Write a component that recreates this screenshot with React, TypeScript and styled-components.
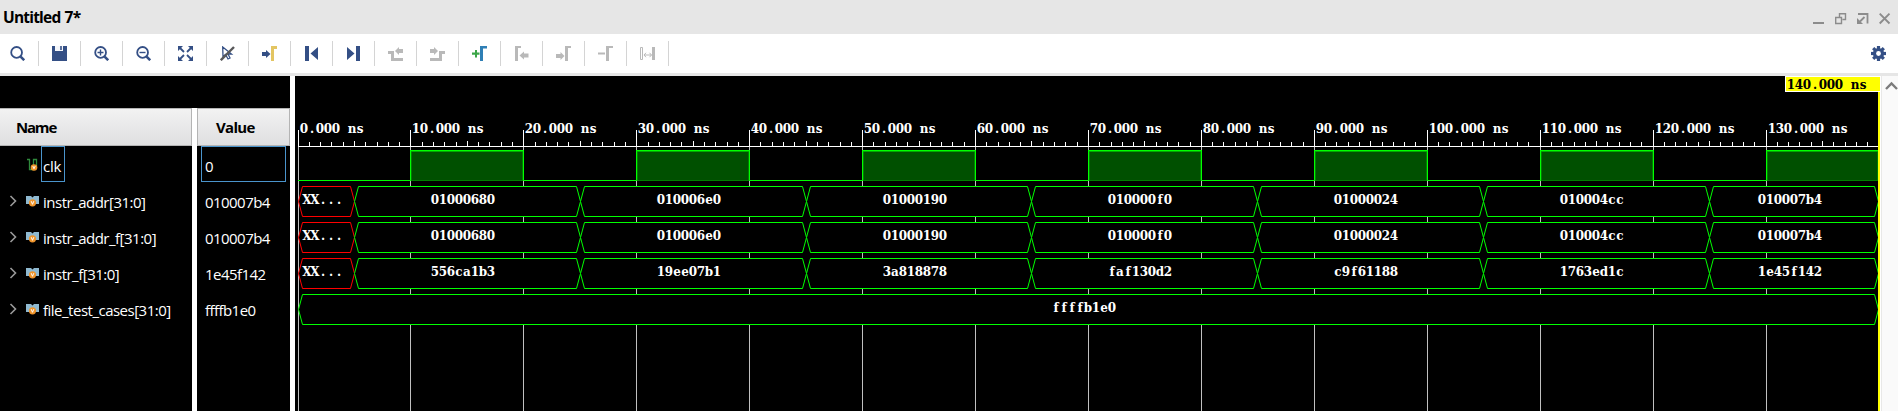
import React from "react";
import styled, { createGlobalStyle } from "styled-components";

const Global = createGlobalStyle`
  body { margin: 0; background: #fff; overflow: hidden; }
  * { box-sizing: border-box; }
`;

const NAVY = "#344f85";
const GREY = "#b9b9b9";
const UI = `"Open Sans", "Noto Sans", sans-serif`;

const Window = styled.div`
  width: 1898px;
  height: 411px;
  display: flex;
  flex-direction: column;
  font-family: ${UI};
  background: #fff;
`;
const TitleBar = styled.header`
  height: 34px;
  flex: none;
  display: flex;
  align-items: center;
  justify-content: space-between;
  padding: 0 7px 0 3px;
  background: #e6e6e6;
`;
const Title = styled.span`
  font-size: 15.5px;
  font-weight: 700;
  letter-spacing: -0.8px;
  word-spacing: 1px;
  line-height: 20px;
  color: #000;
`;
const WindowButtons = styled.div`
  display: flex;
  gap: 10px;
  padding-top: 4px;
`;
const WinSvg = styled.svg`
  display: block;
  width: 12px;
  height: 12px;
`;
const Toolbar = styled.nav`
  height: 42px;
  flex: none;
  display: flex;
  align-items: center;
  border-bottom: 3px solid #e6e6e6;
  background: #fff;
`;
const Tool = styled.div<{ $first?: boolean }>`
  width: ${(p) => (p.$first ? 39 : 42)}px;
  height: 25px;
  display: flex;
  align-items: center;
  padding-left: ${(p) => (p.$first ? 10 : 13)}px;
  border-right: 1px solid #d4d4d4;
`;
const ToolSvg = styled.svg`
  display: block;
  width: 15px;
  height: 15px;
`;
const Settings = styled.div`
  margin-left: auto;
  padding-right: 12px;
`;
const Body = styled.main`
  flex: 1;
  display: flex;
  min-height: 0;
`;
const SignalPane = styled.section`
  width: 290px;
  flex: none;
  display: flex;
  flex-direction: column;
  margin-right: 5px;
  background: #000;
`;
const Spacer = styled.div`
  height: 32px;
  flex: none;
`;
const Columns = styled.div`
  flex: 1;
  display: flex;
  gap: 5px;
  background: #fff;
`;
const Column = styled.div<{ $width: number }>`
  width: ${(p) => p.$width}px;
  background: #000;
`;
const ColumnHead = styled.div<{ $indent: number; $ruled?: boolean }>`
  height: 38px;
  padding: 0 0 0 ${(p) => p.$indent}px;
  border: 1px solid #b4b4b4;
  border-left-width: ${(p) => (p.$ruled ? 1 : 0)}px;
  background: linear-gradient(#f2f2f2, #dfdfe0);
  font-size: 15px;
  font-weight: 700;
  letter-spacing: ${(p) => (p.$ruled ? -0.7 : -1.2)}px;
  line-height: 37px;
`;
const NameRow = styled.div`
  height: 36px;
  display: flex;
  align-items: center;
  padding-left: 9px;
  color: #fff;
`;
const Expander = styled.svg`
  width: 8px;
  height: 12px;
  margin: 2px 9px 0 0;
`;
const KindIcon = styled.svg<{ $drop?: boolean }>`
  width: 13px;
  height: 13px;
  margin: ${(p) => (p.$drop ? 2 : 0)}px 2px 0 0;
`;
const Label = styled.span<{ $focused?: boolean }>`
  height: 36px;
  padding: 0 3px 0 1px;
  border: 1px solid ${(p) => (p.$focused ? "#4a94cc" : "transparent")};
  font-size: 15px;
  letter-spacing: ${(p) => (p.$focused ? -0.2 : -0.5)}px;
  line-height: 38px;
  white-space: pre;
`;
const ValueCell = styled.div<{ $focused?: boolean }>`
  height: 36px;
  margin: 0 4px;
  padding-left: 3px;
  border: 1px solid ${(p) => (p.$focused ? "#4a94cc" : "transparent")};
  color: #fff;
  font-size: 15px;
  letter-spacing: -0.55px;
  line-height: 38px;
`;
const Wave = styled.svg`
  display: block;
  flex: none;
  width: 1586px;
  height: 335px;
  background: #000;
`;
const MonoText = styled.text`
  font-family: "DejaVu Serif Condensed", "DejaVu Serif", serif;
  font-stretch: condensed;
  font-weight: 700;
  font-size: 13.3px;
  text-anchor: middle;
  white-space: pre;
`;
const ScrollTrack = styled.div`
  flex: 1;
  border-left: 1px solid #e8e8e8;
  background: #fafafa;
  padding: 5px 0 0 3px;
`;
const ScrollArrow = styled.svg`
  display: block;
  width: 13px;
  height: 10px;
`;

const magnifier = (
  <>
    <circle cx="6.6" cy="6.4" r="5.4" fill="none" stroke={NAVY} strokeWidth="1.8" />
    <path d="M10.6 10.6L14.2 14.2" stroke={NAVY} strokeWidth="2.6" />
  </>
);

const tools: React.ReactNode[] = [
  magnifier,
  <>
    <path fill={NAVY} d="M0 0H15V15H0Z" />
    <path fill="#f4f6fa" d="M3 0H11V5H3Z" />
    <path fill={NAVY} d="M8.2 0H9.8V4H8.2Z" />
  </>,
  <>
    {magnifier}
    <path d="M3.5 6.5H9.5M6.5 3.5V9.5" stroke={NAVY} strokeWidth="1.4" />
  </>,
  <>
    {magnifier}
    <path d="M3.5 6.5H9.5" stroke={NAVY} strokeWidth="1.4" />
  </>,
  <>
    <path fill={NAVY} d="M0 0H5L0 5ZM15 0V5L10 0ZM0 15V10L5 15ZM15 15H10L15 10Z" />
    <path d="M2 2L6 6M13 2L9 6M2 13L6 9M13 13L9 9" stroke={NAVY} strokeWidth="1.8" />
  </>,
  <>
    <path d="M2.7 1L3 10.5L5.5 8.5L8 13L10 12L8 8H11.5Z" fill="none" stroke={NAVY} strokeWidth="1.3" />
    <path d="M0.8 14.2L14 1" stroke="#58585a" strokeWidth="2.4" />
  </>,
  <>
    <path fill={NAVY} d="M0 6H4V4L8.5 8L4 12V10H0Z" />
    <path fill="#e3c562" d="M9 0H15V3H12V15H9Z" />
  </>,
  <path fill={NAVY} d="M1 0H5V15H1ZM14 1V14L6.5 7.5Z" />,
  <path fill={NAVY} d="M14 0H10V15H14ZM1 1V14L8.5 7.5Z" />,
  <path fill={GREY} d="M0 5H6V12H15V15H3V8H0ZM7 5L11 1V3H15V7H11V9Z" />,
  <path fill={GREY} d="M15 5H9V12H0V15H12V8H15ZM8 5L4 1V3H0V7H4V9Z" />,
  <>
    <path fill="#3ba648" d="M0 6.5H3V4H5V6.5H7.5V8.7H5V11.5H3V8.7H0Z" />
    <path fill="#2f7fb5" d="M8 0H15V2.5H11V15H8Z" />
  </>,
  <path fill={GREY} d="M1 0H7V2H4V15H1ZM5.5 9.5L10 5.5V7.5H14.5V11.5H10V13.5Z" />,
  <path fill={GREY} d="M9 0H15V2H12V15H9ZM8.5 10L4.5 6V8H0V12H4.5V14Z" />,
  <path fill={GREY} d="M0 6.5H7V8.5H0ZM8 0H15V2H11V15H8Z" />,
  <>
    <path fill={GREY} d="M12 1H15V14H12Z" />
    <path d="M0.5 1.5H2.5V13.5H0.5ZM4 9H11.5M6 6.8L4 9L6 11.2M9.5 6.8L11.5 9L9.5 11.2" fill="none" stroke={GREY} />
  </>,
];

const signals = [
  { name: "clk", value: "0" },
  { name: "instr_addr[31:0]", value: "010007b4" },
  { name: "instr_addr_f[31:0]", value: "010007b4" },
  { name: "instr_f[31:0]", value: "1e45f142" },
  { name: "file_test_cases[31:0]", value: "ffffb1e0" },
];

const addresses = ["XX...", "01000680", "010006e0", "01000190", "010000f0", "01000024", "010004cc", "010007b4"];
const buses = [
  addresses,
  addresses,
  ["XX...", "556ca1b3", "19ee07b1", "3a818878", "faf130d2", "c9f61188", "1763ed1c", "1e45f142"],
];

// Text on a fixed 8px character grid.
const WaveText = ({ x, y, fill = "#fff", children }: { x: number; y: number; fill?: string; children: string }) => (
  <MonoText x={Array.from(children, (_, i) => x + 4 + i * 8).join(" ")} y={y} fill={fill}>
    {children}
  </MonoText>
);

// Pixel column of a time in ns, measured from the left edge of the wave area.
const xAt = (t: number) => (t === 0 ? 3 : Math.floor(2.96 + t * 11.2927));
const edges = [0, 5, 25, 45, 65, 85, 105, 125, 140];

const BusSegment = ({ x1, x2, y, text }: { x1: number; x2: number; y: number; text: string }) => {
  const unknown = text.startsWith("XX");
  const a = x1 + 0.5;
  const b = x2 + 0.5;
  return (
    <>
      <path
        d={`M${a} ${y + 15.5}L${a + 4} ${y + 0.5}H${b - 4}L${b} ${y + 15.5}L${b - 4} ${y + 30.5}H${a + 4}Z`}
        fill="#000"
        stroke={unknown ? "#f00" : "#0f0"}
      />
      <WaveText x={unknown ? x1 + 5 : Math.round((x1 + x2) / 2) - 36} y={y + 18}>
        {text}
      </WaveText>
    </>
  );
};

const WaveView = () => (
  <Wave viewBox="0 0 1586 335">
    {Array.from({ length: 14 }, (_, i) => (
      <g key={i}>
        <rect x={xAt(i * 10)} y={71} width={1} height={264} fill="#c0c0c0" />
        <rect x={xAt(i * 10)} y={54} width={1} height={17} fill="#fff" />
        {[1, 2, 3, 4, 5, 6, 7, 8, 9].map((k) => (
          <rect key={k} x={xAt(i * 10 + k)} y={k === 5 ? 65 : 66} width={1} height={5} fill="#fff" />
        ))}
        <WaveText x={xAt(i * 10) + 2} y={57}>{`${i * 10}.000 ns`}</WaveText>
      </g>
    ))}
    <rect x={3} y={70} width={1580} height={1} fill="#fff" />
    {Array.from({ length: 7 }, (_, i) => {
      const low = xAt(i * 20);
      const up = xAt(i * 20 + 10);
      const down = xAt(i * 20 + 20);
      const w = down - up;
      return (
        <g key={i}>
          <rect x={low} y={104} width={up - low} height={1} fill="#0f0" />
          <rect x={up} y={74} width={w + 1} height={31} fill="#008000" />
          <rect x={up + 2} y={76} width={w - 3} height={28} fill="#005000" />
          <rect x={up} y={74} width={w + 1} height={1} fill="#0f0" />
          <rect x={up} y={75} width={w + 1} height={1} fill="#00a800" />
          <rect x={up} y={74} width={1} height={31} fill="#0f0" />
          <rect x={down} y={74} width={1} height={31} fill="#0f0" />
        </g>
      );
    })}
    {buses.map((values, row) =>
      values.map((text, i) => (
        <BusSegment key={`${row}-${i}`} x1={xAt(edges[i])} x2={xAt(edges[i + 1])} y={110 + row * 36} text={text} />
      ))
    )}
    <BusSegment x1={3} x2={1583} y={218} text="ffffb1e0" />
    <rect x={1583} y={0} width={2} height={335} fill="#ff0" />
    <rect x={1490} y={0} width={95} height={16} fill="#fff" />
    <rect x={1491} y={1} width={94} height={14} fill="#ff0" />
    <WaveText x={1492} y={13} fill="#000">140.000 ns</WaveText>
    <rect x={1585} y={0} width={1} height={335} fill="#fff" />
  </Wave>
);

const ClockIcon = () => (
  <KindIcon viewBox="0 0 13 13">
    <path d="M1 1.5H3.5V11.5H7.5V1.5H10.5V8" fill="none" stroke="#2f8a3c" strokeWidth="1.3" />
    <circle cx="8" cy="9.5" r="3.3" fill="#f0952c" />
    <path d="M6.8 8L8 10.8L9.2 8" fill="none" stroke="#fff" strokeWidth="0.9" />
  </KindIcon>
);
const BusIcon = () => (
  <KindIcon $drop viewBox="0 0 13 13">
    <path d="M0 1H5L6.5 2.5L8 1H13V9H9L6.5 6L4 9H0Z" fill="#8fb9d0" />
    <circle cx="6.5" cy="7.8" r="3.6" fill="#f0952c" />
    <path d="M5.2 6.2L6.5 9.3L7.8 6.2" fill="none" stroke="#fff" strokeWidth="1" />
  </KindIcon>
);

const App = () => (
  <>
    <Global />
    <Window>
      <TitleBar>
        <Title>Untitled 7*</Title>
        <WindowButtons>
          <WinSvg viewBox="0 0 12 12"><path d="M0 10H11" stroke="#8c8c8c" strokeWidth="2" /></WinSvg>
          <WinSvg viewBox="0 0 12 12">
            <path d="M4.5 4V0.7H10.5V6.5H7.5M0.7 4.5H6.5V10.5H0.7Z" fill="none" stroke="#8c8c8c" strokeWidth="1.4" />
          </WinSvg>
          <WinSvg viewBox="0 0 12 12">
            <path d="M1 1H10.5V10.5M7.5 4L3 8.5" fill="none" stroke="#8c8c8c" strokeWidth="1.8" />
            <path d="M0 5V11H6Z" fill="#8c8c8c" />
          </WinSvg>
          <WinSvg viewBox="0 0 12 12"><path d="M0.7 0.7L10.5 10.5M10.5 0.7L0.7 10.5" stroke="#8c8c8c" strokeWidth="1.9" /></WinSvg>
        </WindowButtons>
      </TitleBar>
      <Toolbar>
        {tools.map((icon, i) => (
          <Tool key={i} $first={i === 0}>
            <ToolSvg viewBox="0 0 15 15">{icon}</ToolSvg>
          </Tool>
        ))}
        <Settings>
          <ToolSvg viewBox="0 0 15 15">
            {[0, 45, 90, 135].map((r) => (
              <rect key={r} x="5.9" y="0" width="3.2" height="15" fill={NAVY} transform={`rotate(${r} 7.5 7.5)`} />
            ))}
            <circle cx="7.5" cy="7.5" r="5.6" fill={NAVY} />
            <circle cx="7.5" cy="7.5" r="2.4" fill="#fff" />
          </ToolSvg>
        </Settings>
      </Toolbar>
      <Body>
        <SignalPane>
          <Spacer />
          <Columns>
            <Column $width={192}>
              <ColumnHead $indent={16}>Name</ColumnHead>
              {signals.map((s, i) => (
                <NameRow key={s.name}>
                  <Expander viewBox="0 0 8 12">
                    {i > 0 && <path d="M1.5 1L6.5 6L1.5 11" fill="none" stroke="#9a9a9a" strokeWidth="1.6" />}
                  </Expander>
                  {i === 0 ? <ClockIcon /> : <BusIcon />}
                  <Label $focused={i === 0}>{s.name}</Label>
                </NameRow>
              ))}
            </Column>
            <Column $width={93}>
              <ColumnHead $indent={18} $ruled>Value</ColumnHead>
              {signals.map((s, i) => (
                <ValueCell key={s.name} $focused={i === 0}>{s.value}</ValueCell>
              ))}
            </Column>
          </Columns>
        </SignalPane>
        <WaveView />
        <ScrollTrack>
          <ScrollArrow viewBox="0 0 13 10">
            <path d="M1 8L6.5 2.5L12 8" fill="none" stroke="#7c7c7c" strokeWidth="2.4" />
          </ScrollArrow>
        </ScrollTrack>
      </Body>
    </Window>
  </>
);

export default App;
